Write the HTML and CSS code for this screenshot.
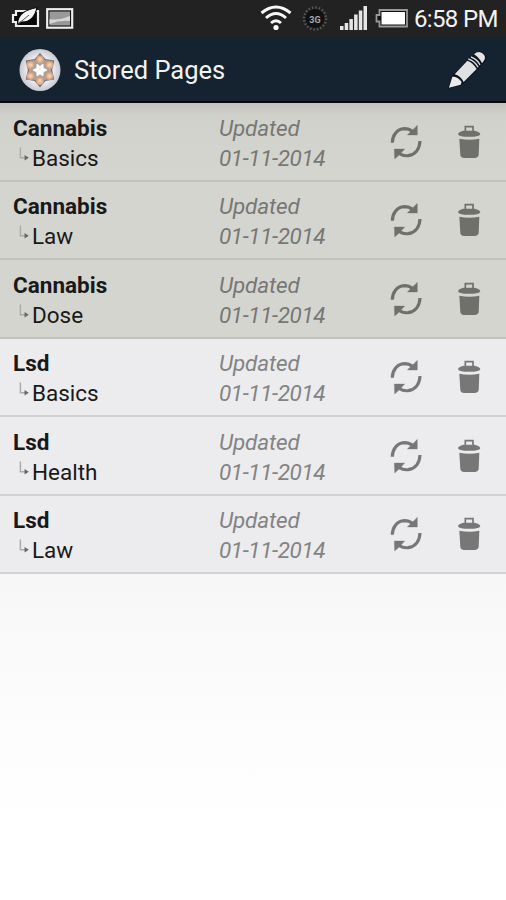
FILE: index.html
```html
<!DOCTYPE html>
<html lang="en">
<head>
<meta charset="utf-8">
<title>Stored Pages</title>
<link rel="stylesheet" href="styles.css">
</head>
<body>
<svg class="defs" aria-hidden="true">
  <symbol id="refresh" viewBox="60 72 96 108">
    <path d="M67 128C67 107 80 87 103 86C112 86 121 89 127 94" fill="none" stroke="currentColor" stroke-width="9.500"/>
    <path d="M142 76V105H112L120 97L132 86Z" fill="currentColor" stroke="currentColor"/>
    <path d="M150 123C149 147 136 164 114 167C105 168 96 166 88 161" fill="none" stroke="currentColor" stroke-width="9.500"/>
    <path d="M73 147H104L96 156L85 167L74 177Z" fill="currentColor" stroke="currentColor"/>
  </symbol>
  <symbol id="trash" viewBox="261 72 72 108">
    <path d="M286 94V80H309V94" fill="none" stroke="currentColor" stroke-width="5"/>
    <path d="M264 102Q265 96 280 92H314Q330 96 331 102Q330 108 312 110H283Q265 108 264 102Z" fill="currentColor"/>
    <path d="M268 116Q298 122 328 116L326 166Q325 172 316 174H282Q272 173 271 166Z" fill="currentColor"/>
  </symbol>
  <symbol id="branch" viewBox="0 0 14 18">
    <path d="M1.500 1V12H7" fill="none" stroke="#aaa" stroke-width="1.600"/>
    <path d="M6 9L10.500 12L6 15Z" fill="#666"/>
  </symbol>
</svg>
<header class="status">
  <svg class="status-left" viewBox="0 0 80 36">
    <path d="M16 11H38V26H16V22H13V15H16Z" fill="#080808" stroke="#eee" stroke-width="2.200"/>
    <path d="M17.500 24C18 13 26 10 37 7.500C35 17 30 22.500 21 22Z" fill="#f4f4f4" stroke="#080808" stroke-width="1.200"/>
    <path d="M17 25L29 15" stroke="#555" stroke-width="1"/>
    <rect x="47.200" y="9.200" width="25" height="18.500" fill="#111" stroke="#eee" stroke-width="2.200"/>
    <rect x="49.500" y="11.500" width="20.500" height="14" fill="#999"/>
    <path d="M49.500 19Q58 21 70 16V21Q59 20 49.500 24Z" fill="#d6d6d6"/>
  </svg>
  <svg class="status-right" viewBox="0 0 156 36">
    <g fill="none" stroke="#f7f7f7" stroke-width="3">
      <path d="M1.500 13Q16 1 30.500 13"/><path d="M6 18Q16 9 26 18"/><path d="M11 23Q16 18.500 21 23"/>
    </g>
    <circle cx="16" cy="27.500" r="2.600" fill="#fff"/>
    <circle cx="55" cy="18.500" r="9.500" fill="#111"/>
    <circle cx="55" cy="18.500" r="11" fill="none" stroke="#555" stroke-width="2.500" stroke-dasharray="1.600 1.850"/>
    <text class="threeg" x="55" y="22.500" text-anchor="middle">3G</text>
    <path d="M80 26h3.500v4h-3.500zM84.700 23h3.500v7h-3.500zM89.400 19h3.500v11h-3.500zM94.100 14.500h3.500V30h-3.500zM98.800 10.500h3.500V30h-3.500zM103.500 6h3.500V30h-3.500z" fill="#e6e6e6"/>
    <path d="M119.500 10H147V26.500H119.500V21.500H116.500V15H119.500Z" fill="#111" stroke="#999" stroke-width="1.800"/>
    <rect x="121.500" y="12" width="23.500" height="12.500" fill="#fff"/>
  </svg>
  <span class="time">6:58 PM</span>
</header>
<div class="bar">
  <svg class="logo" viewBox="0 0 42 44">
    <defs>
      <radialGradient id="disc"><stop offset=".65" stop-color="#e9e9ef"/><stop offset="1" stop-color="#c6c8d0"/></radialGradient>
      <radialGradient id="bead"><stop offset="0" stop-color="#fbdcb8"/><stop offset="1" stop-color="#d39b78"/></radialGradient>
    </defs>
    <ellipse cx="21" cy="22" rx="20.500" ry="21" fill="url(#disc)"/>
    <path d="M21 6L26 11.500L34.500 13L32.500 22L34.500 31L26 32.500L21 38.500L16 32.500L7.500 31L9.500 22L7.500 13L16 11.500Z" fill="#aaa19c" stroke="#747478" stroke-width="1.200"/>
    <g fill="url(#bead)"><circle cx="21" cy="11.500" r="3.900"/><circle cx="30.500" cy="17" r="3.900"/><circle cx="30.500" cy="28" r="3.900"/><circle cx="21" cy="33" r="3.900"/><circle cx="11.500" cy="28" r="3.900"/><circle cx="11.500" cy="17" r="3.900"/></g>
    <path d="M21 18.500L24 16L24.200 20.200L28 22L24.200 24L24 28L21 26L18 28L17.800 24L14 22L17.800 20.200L18 16Z" fill="#fff" stroke="#fff" stroke-width=".8"/>
  </svg>
  <h1>Stored Pages</h1>
  <svg class="pencil" viewBox="54 42 126 120">
    <path d="M58 158L68 121L120 67L141 52Q150 42 162 51L168 56Q178 65 168 76L153 94L98 148Z" fill="#0b131d"/>
    <path d="M60 155L70 122Q86 121 98 138L95 146Z" fill="#e8eaec"/>
    <path d="M77 115L115 74Q132 80 143 99L104 138Q95 120 77 115Z" fill="#dfe1e3"/>
    <path d="M118 69Q139 76 147 94M126 63Q145 70 153 87" fill="none" stroke="#d8dadc" stroke-width="4"/>
    <path d="M135 55Q149 42 162 53Q173 63 164 75L159 82Q151 65 135 55Z" fill="#e2e4e6"/>
  </svg>
</div>
<main class="list">
  <div class="row grey"><div class="page"><b>Cannabis</b><span class="sub"><svg><use href="#branch"/></svg>Basics</span></div><div class="date"><span>Updated</span><span class="day">01-11-2014</span></div><svg class="refresh"><use href="#refresh"/></svg><svg class="trash"><use href="#trash"/></svg></div>
  <div class="row grey"><div class="page"><b>Cannabis</b><span class="sub"><svg><use href="#branch"/></svg>Law</span></div><div class="date"><span>Updated</span><span class="day">01-11-2014</span></div><svg class="refresh"><use href="#refresh"/></svg><svg class="trash"><use href="#trash"/></svg></div>
  <div class="row grey"><div class="page"><b>Cannabis</b><span class="sub"><svg><use href="#branch"/></svg>Dose</span></div><div class="date"><span>Updated</span><span class="day">01-11-2014</span></div><svg class="refresh"><use href="#refresh"/></svg><svg class="trash"><use href="#trash"/></svg></div>
  <div class="row"><div class="page"><b>Lsd</b><span class="sub"><svg><use href="#branch"/></svg>Basics</span></div><div class="date"><span>Updated</span><span class="day">01-11-2014</span></div><svg class="refresh"><use href="#refresh"/></svg><svg class="trash"><use href="#trash"/></svg></div>
  <div class="row"><div class="page"><b>Lsd</b><span class="sub"><svg><use href="#branch"/></svg>Health</span></div><div class="date"><span>Updated</span><span class="day">01-11-2014</span></div><svg class="refresh"><use href="#refresh"/></svg><svg class="trash"><use href="#trash"/></svg></div>
  <div class="row"><div class="page"><b>Lsd</b><span class="sub"><svg><use href="#branch"/></svg>Law</span></div><div class="date"><span>Updated</span><span class="day">01-11-2014</span></div><svg class="refresh"><use href="#refresh"/></svg><svg class="trash"><use href="#trash"/></svg></div>
</main>
</body>
</html>
```
FILE: styles.css
```css
* { box-sizing: border-box; }
body {
  margin: 0;
  height: 900px;
  overflow: hidden;
  font-family: Roboto, "Liberation Sans", sans-serif;
  background: linear-gradient(#f7f7f7 0, #f7f7f7 573px, #fdfdfd 745px, #fff 840px);
  display: flex;
  flex-direction: column;
}
svg { display: block; flex: none; }
.defs { width: 0; height: 0; flex: none; }
.status {
  height: 37px;
  flex: none;
  background: #222;
  display: flex;
  align-items: flex-start;
}
.status-left { width: 80px; height: 36px; }
.status-right { width: 156px; height: 36px; margin-left: 180px; }
.threeg { font-size: 9px; font-weight: 700; fill: #aaa; }
.time {
  font-size: 24px;
  line-height: 38px;
  letter-spacing: -.65px;
  color: #f2f2f2;
  margin-left: -2px;
  white-space: nowrap;
}
.bar {
  height: 66px;
  flex: none;
  background: #152230;
  border-bottom: 2px solid #050a10;
  display: flex;
  align-items: center;
  padding: 1px 17px 0 19px;
}
.logo { width: 42px; height: 44px; }
h1 {
  margin: 0 auto 0 13px;
  font-size: 25.5px;
  font-weight: 400;
  line-height: 36px;
  color: #f2f2f2;
}
.pencil { width: 42px; height: 40px; }
.list {
  flex: none;
  height: 471px;
  display: grid;
  grid-template-rows: repeat(6, 1fr);
  color: #191919;
  font-size: 22.5px;
}
.row {
  display: grid;
  grid-template-columns: 206px 171px 32px 35px 24px;
  padding: 9.5px 0 0 13px;
  background: #ececee;
  border-bottom: 2px solid #d2d2d3;
}
.row.grey { background: #d5d5d0; border-bottom-color: #c1c1bd; }
.row:first-child { background: linear-gradient(#c5c3bf, #d2d2cd 14px, #d5d5d0); }
.page, .date { display: flex; flex-direction: column; line-height: 30.3px; }
.sub { display: flex; align-items: center; padding-left: 6px; }
.sub svg { width: 13px; height: 18px; margin-top: -6px; }
.date { font-style: italic; color: #838383; letter-spacing: -.15px; }
.day { letter-spacing: -.4px; }
.grey .date { color: #777774; }
.refresh { width: 32px; height: 36px; color: #777; margin-top: 11px; }
.trash { width: 24px; height: 36px; color: #777; margin-top: 11px; grid-column: 5; }
.grey .refresh, .grey .trash { color: #6f6f6c; }
```
